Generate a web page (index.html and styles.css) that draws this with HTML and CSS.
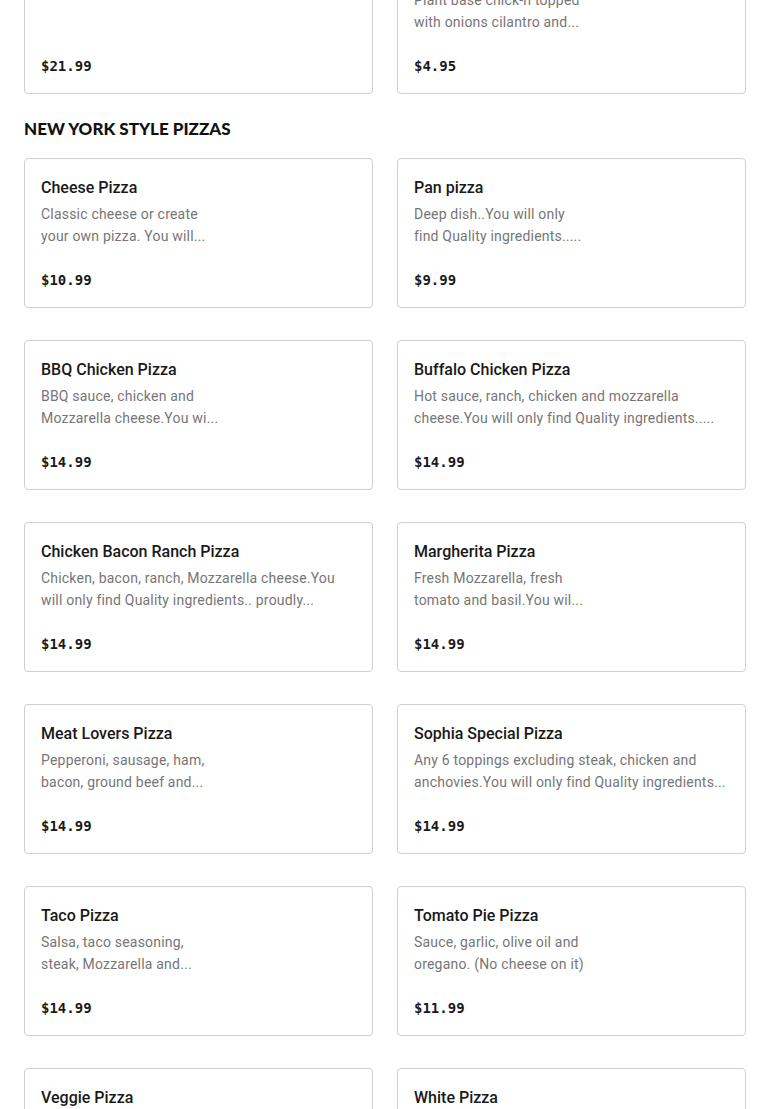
FILE: index.html
```html
<!DOCTYPE html>
<html>
<head>
<meta charset="utf-8">
<link rel="stylesheet" href="styles.css">
</head>
<body>
<main class="page">
  <section class="grid">
    <article class="card">
      <h3 class="title">Family Special</h3>
      <p class="desc"></p>
      <div class="price">$21.99</div>
    </article>
    <article class="card">
      <h3 class="title">Vegan Chick-n Taco</h3>
      <p class="desc">Plant base chick-n topped<br>with onions cilantro and...</p>
      <div class="price">$4.95</div>
    </article>
  </section>

  <h2 class="section-title">NEW YORK STYLE PIZZAS</h2>

  <section class="grid">
    <article class="card">
      <h3 class="title">Cheese Pizza</h3>
      <p class="desc">Classic cheese or create<br>your own pizza. You will...</p>
      <div class="price">$10.99</div>
    </article>
    <article class="card">
      <h3 class="title">Pan pizza</h3>
      <p class="desc">Deep dish..You will only<br>find Quality ingredients.....</p>
      <div class="price">$9.99</div>
    </article>
    <article class="card">
      <h3 class="title">BBQ Chicken Pizza</h3>
      <p class="desc">BBQ sauce, chicken and<br>Mozzarella cheese.You wi...</p>
      <div class="price">$14.99</div>
    </article>
    <article class="card">
      <h3 class="title">Buffalo Chicken Pizza</h3>
      <p class="desc">Hot sauce, ranch, chicken and mozzarella<br>cheese.You will only find Quality ingredients.....</p>
      <div class="price">$14.99</div>
    </article>
    <article class="card">
      <h3 class="title">Chicken Bacon Ranch Pizza</h3>
      <p class="desc">Chicken, bacon, ranch, Mozzarella cheese.You<br>will only find Quality ingredients.. proudly...</p>
      <div class="price">$14.99</div>
    </article>
    <article class="card">
      <h3 class="title">Margherita Pizza</h3>
      <p class="desc">Fresh Mozzarella, fresh<br>tomato and basil.You wil...</p>
      <div class="price">$14.99</div>
    </article>
    <article class="card">
      <h3 class="title">Meat Lovers Pizza</h3>
      <p class="desc">Pepperoni, sausage, ham,<br>bacon, ground beef and...</p>
      <div class="price">$14.99</div>
    </article>
    <article class="card">
      <h3 class="title">Sophia Special Pizza</h3>
      <p class="desc">Any 6 toppings excluding steak, chicken and<br>anchovies.You will only find Quality ingredients...</p>
      <div class="price">$14.99</div>
    </article>
    <article class="card">
      <h3 class="title">Taco Pizza</h3>
      <p class="desc">Salsa, taco seasoning,<br>steak, Mozzarella and...</p>
      <div class="price">$14.99</div>
    </article>
    <article class="card">
      <h3 class="title">Tomato Pie Pizza</h3>
      <p class="desc">Sauce, garlic, olive oil and<br>oregano. (No cheese on it)</p>
      <div class="price">$11.99</div>
    </article>
    <article class="card">
      <h3 class="title">Veggie Pizza</h3>
      <p class="desc">Peppers, onions, mushrooms,<br>olives, tomatoes and...</p>
      <div class="price">$14.99</div>
    </article>
    <article class="card">
      <h3 class="title">White Pizza</h3>
      <p class="desc">Ricotta, Mozzarella, garlic<br>and olive oil. You will...</p>
      <div class="price">$14.99</div>
    </article>
  </section>
</main>
</body>
</html>
```

FILE: styles.css
```css
html, body {
  margin: 0;
  padding: 0;
  background: #ffffff;
}

body {
  font-family: Roboto, Inter, "Noto Sans", sans-serif;
  color: #191919;
  overflow: hidden;
}

.page {
  margin-top: -56px;
  padding: 0 24px;
}

.grid {
  display: grid;
  grid-template-columns: minmax(0, 1fr) minmax(0, 1fr);
  column-gap: 24px;
  row-gap: 32px;
}

.card {
  box-sizing: border-box;
  height: 150px;
  min-width: 0;
  border: 1px solid #d0d0d0;
  border-radius: 4px;
  padding: 16px;
  display: flex;
  flex-direction: column;
}

.title {
  margin: 1px 0 0;
  font-size: 16px;
  line-height: 24px;
  font-weight: 500;
  color: #191919;
  white-space: nowrap;
  overflow: hidden;
}

.desc {
  margin: 3px 0 0;
  font-size: 14px;
  line-height: 22px;
  letter-spacing: 0.2px;
  color: #767676;
  white-space: nowrap;
  overflow: hidden;
  height: 44px;
}

.price {
  margin-top: auto;
  margin-bottom: 1px;
  font-family: "DejaVu Sans Mono", "Liberation Mono", monospace;
  font-weight: 700;
  font-size: 14px;
  line-height: 20px;
  color: #191919;
}

.section-title {
  margin: 23px 0 17px;
  font-family: Lato, Inter, sans-serif;
  font-weight: 900;
  font-size: 17px;
  line-height: 24px;
  color: #111111;
}
```
